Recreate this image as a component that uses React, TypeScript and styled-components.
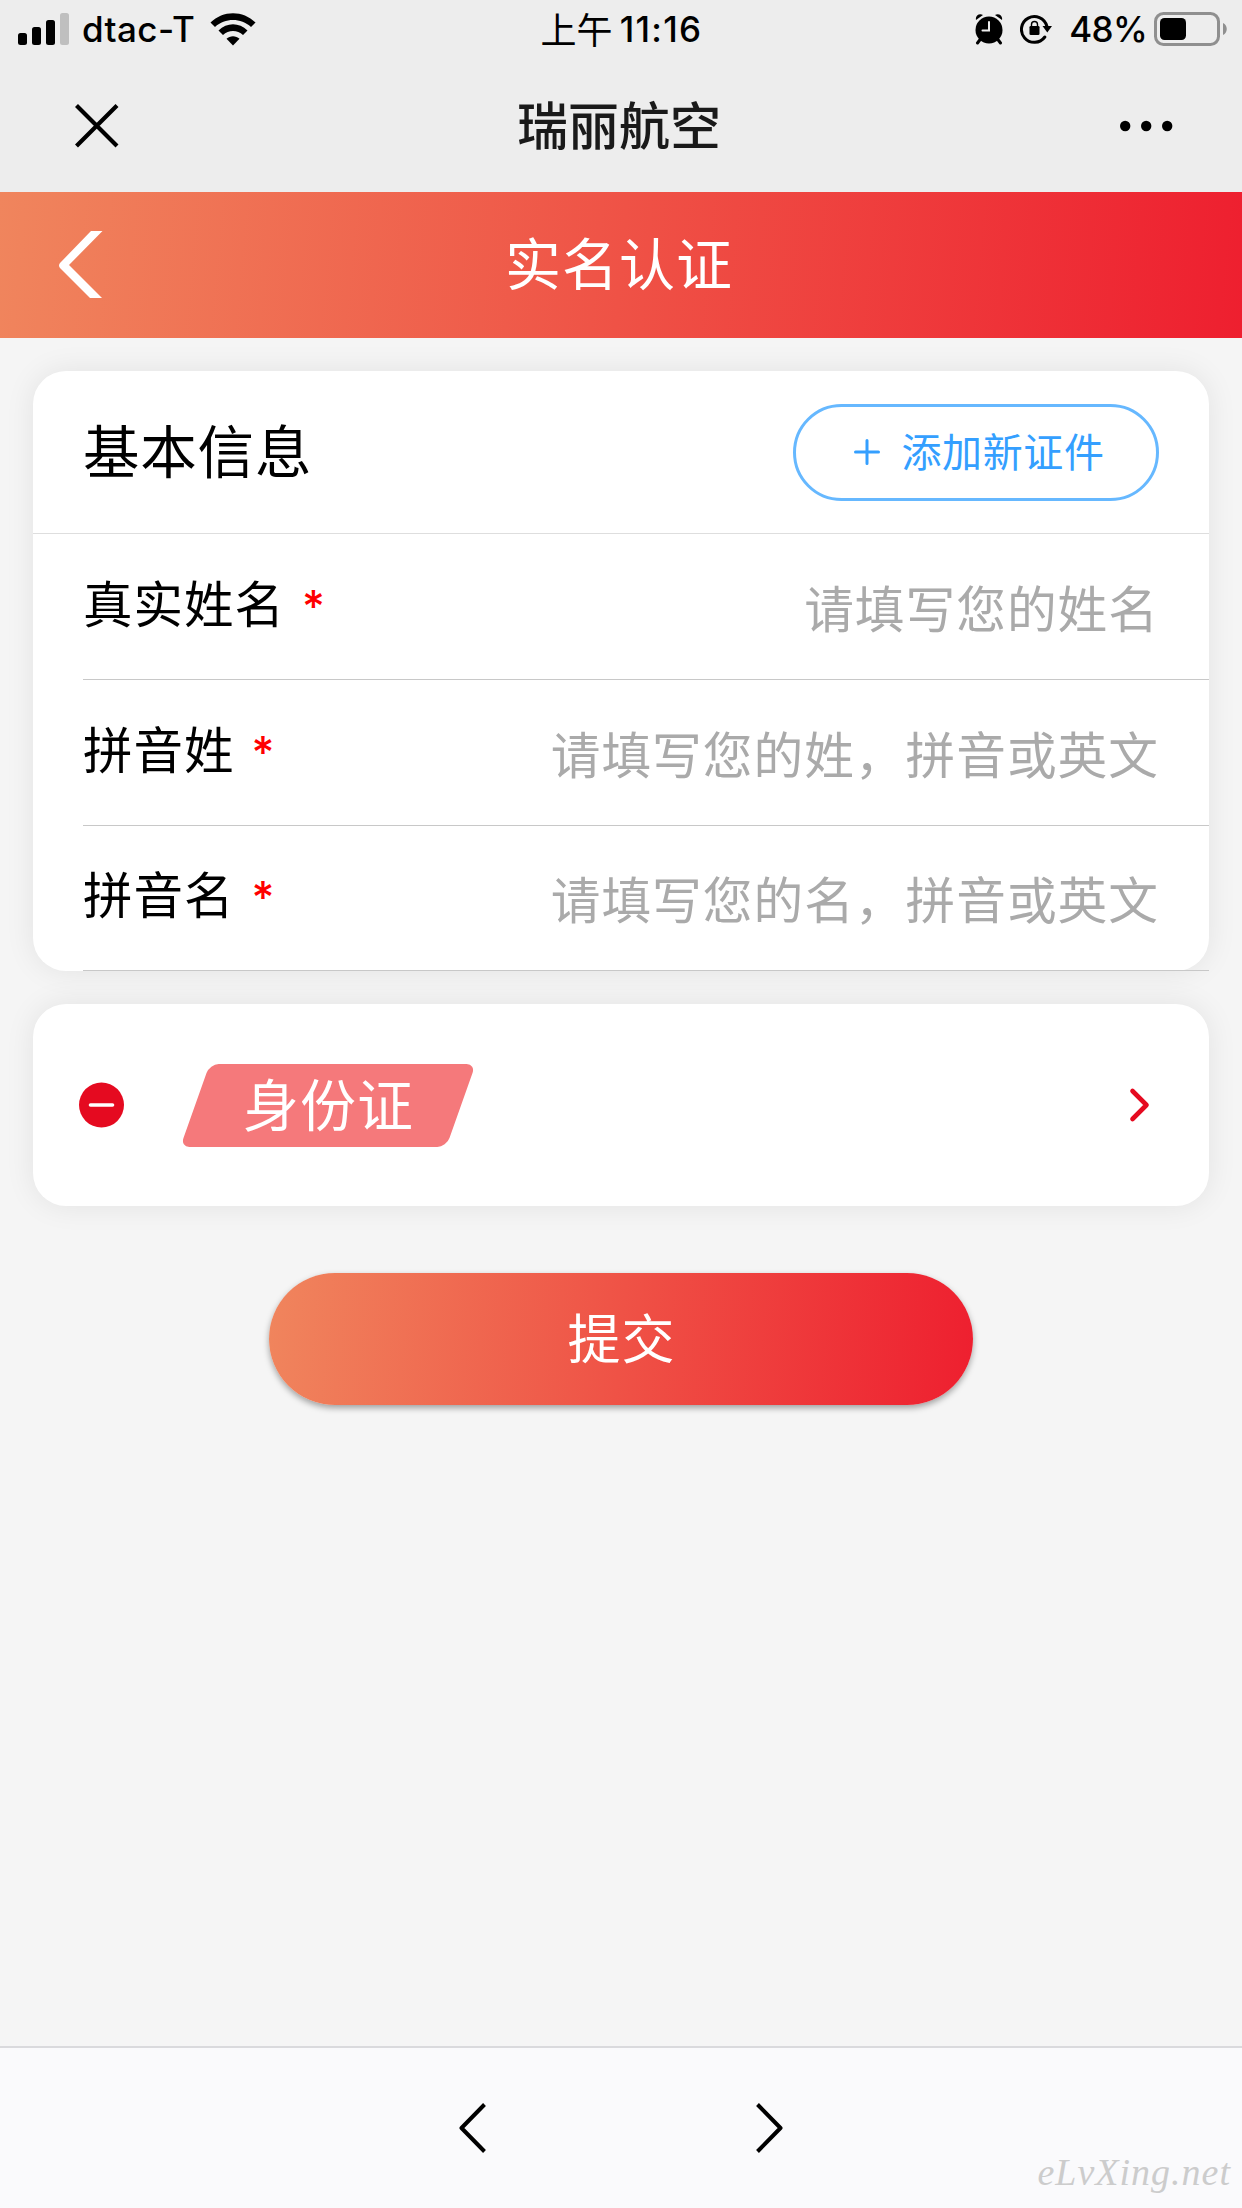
import React from 'react';
import styled, { createGlobalStyle } from 'styled-components';

const GlobalStyle = createGlobalStyle`
  * { box-sizing: border-box; }
  body {
    margin: 0;
    background: #f5f5f5;
    font-family: 'Noto Sans CJK SC', sans-serif;
    color: #000;
  }
  svg { display: block; flex: none; }
`;

const brandGradient = 'linear-gradient(95deg, #f0855d 0%, #ee1f2f 100%)';

const Screen = styled.div`
  width: 1242px;
  height: 2208px;
  display: flex;
  flex-direction: column;
  overflow: hidden;
`;

const Chrome = styled.header`
  height: 192px;
  flex: none;
  background: #ededed;
`;

const StatusBar = styled.div`
  height: 60px;
  display: grid;
  grid-template-columns: 1fr auto 1fr;
  align-items: center;
  padding: 0 15px 2px 18px;
  font-family: Inter, 'Noto Sans CJK SC', sans-serif;
  font-size: 35px;
  font-weight: 500;
  line-height: 56px;
`;

const StatusGroup = styled.div<{ $end?: boolean }>`
  display: flex;
  align-items: center;
  justify-content: ${(p) => (p.$end ? 'flex-end' : 'flex-start')};
`;

const Carrier = styled.span`
  margin: 0 15px 1px 13px;
  letter-spacing: 0.4px;
`;

const Clock = styled.span`
  display: flex;
  gap: 7px;
  margin: 0 2px 1px 0;
`;

const Meridiem = styled.span`
  font-family: 'Noto Sans CJK SC', sans-serif;
  font-size: 36px;
  font-weight: 400;
  line-height: 54px;
`;

const ClockDigits = styled.span`
  letter-spacing: 1.3px;
`;

const Percent = styled.span`
  margin: 0 7px 1px 17px;
  letter-spacing: -0.7px;
`;

const NavBar = styled.div`
  height: 132px;
  display: grid;
  grid-template-columns: 1fr auto 1fr;
  align-items: center;
  padding: 0 68px 1px 74px;
`;

const NavTitle = styled.h1`
  margin: 0 10px 0 0;
  font-size: 51px;
  line-height: 126px;
  padding-bottom: 5px;
  font-weight: 500;
  color: #1a1a1a;
`;

const NavEnd = styled.div`
  display: flex;
  justify-content: flex-end;
`;

const PageHeader = styled.div`
  height: 146px;
  flex: none;
  display: grid;
  grid-template-columns: 1fr auto 1fr;
  align-items: center;
  padding: 0 59px 2px;
  background: ${brandGradient};
`;

const PageTitle = styled.h2`
  margin: 0 4px 0 0;
  padding-bottom: 6px;
  font-size: 56px;
  line-height: 136px;
  font-weight: 400;
  letter-spacing: 1px;
  color: #fff;
`;

const Content = styled.main`
  flex: 1;
  display: flex;
  flex-direction: column;
  gap: 33px;
  padding: 33px 33px 0;
`;

const Card = styled.section`
  border-radius: 33px;
  background: #fff;
  box-shadow: 0 0 30px rgba(0, 0, 0, 0.08);
`;

const CardHead = styled.div`
  height: 163px;
  display: flex;
  align-items: center;
  justify-content: space-between;
  padding: 0 50px;
  border-bottom: 1px solid #dedede;
`;

const CardTitle = styled.h3`
  margin: 0;
  padding-bottom: 8px;
  font-size: 56.5px;
  line-height: 154px;
  font-weight: 400;
  letter-spacing: 0.8px;
`;

const AddButton = styled.button`
  width: 366px;
  height: 97px;
  display: flex;
  align-items: center;
  justify-content: center;
  gap: 22px;
  padding: 0 0 0 6px;
  border: 3px solid #66b8ff;
  border-radius: 49px;
  background: none;
  color: #349fff;
  font: 400 40px/86px 'Noto Sans CJK SC', sans-serif;
  letter-spacing: 0.6px;
`;

const AddLabel = styled.span`
  margin-bottom: 4px;
`;

const Field = styled.label`
  height: 146px;
  margin-left: 50px;
  padding-right: 50px;
  display: flex;
  align-items: center;
  border-bottom: 1px solid #c8c8c8;

  &:last-child { height: 145px; }
`;

const FieldLabel = styled.span`
  font-size: 49.5px;
  line-height: 70px;
  font-weight: 400;
  letter-spacing: 1px;
  margin-bottom: 10px;
`;

const Required = styled.span`
  margin: 0 0 2px 17px;
  font: 500 44px/70px Inter, sans-serif;
  color: #f00;
`;

const FieldInput = styled.input`
  flex: 1;
  min-width: 0;
  height: 100px;
  margin-bottom: 2px;
  padding: 0;
  border: 0;
  outline: 0;
  background: none;
  text-align: right;
  font: 400 49.7px/100px 'Noto Sans CJK SC', sans-serif;
  letter-spacing: 1px;
  &::placeholder { color: #aaa; opacity: 1; }
`;

const DocumentCard = styled(Card)`
  height: 202px;
  display: flex;
  align-items: center;
  padding: 0 55px 0 46px;
`;

const DocumentTag = styled.div`
  width: 266px;
  height: 83px;
  margin: 0 auto 0 71px;
  display: flex;
  justify-content: center;
  border-radius: 9px;
  background: #f5797b;
  transform: skewX(-19.5deg);
`;

const DocumentName = styled.span`
  transform: skewX(19.5deg);
  font-size: 56px;
  line-height: 75px;
  font-weight: 400;
  letter-spacing: 1px;
  color: #fff;
`;

const SubmitButton = styled.button`
  align-self: center;
  width: 704px;
  height: 132px;
  margin-top: 34px;
  padding: 0 0 6px 1px;
  border: 0;
  border-radius: 66px;
  background: ${brandGradient};
  box-shadow: 0 3px 6px rgba(0, 0, 0, 0.35);
  color: #fff;
  font: 400 53px/120px 'Noto Sans CJK SC', sans-serif;
  letter-spacing: 1px;
`;

const BottomBar = styled.footer`
  position: relative;
  height: 162px;
  flex: none;
  display: flex;
  justify-content: center;
  align-items: center;
  gap: 268px;
  border-top: 2px solid #dadadd;
  background: #fafafc;
`;

const Watermark = styled.span`
  position: absolute;
  right: 11px;
  bottom: 12px;
  font: italic 400 38px/48px 'Liberation Serif', serif;
  letter-spacing: 1px;
  color: #ccc;
`;

const SignalIcon = () => (
  <svg width="51" height="32" viewBox="0 0 51 32">
    <rect x="0" y="20" width="9" height="12" rx="2.5" />
    <rect x="14" y="14" width="9" height="18" rx="2.5" />
    <rect x="28" y="7" width="9" height="25" rx="2.5" />
    <rect x="42" y="0" width="9" height="32" rx="2.5" fill="#bfbfbf" />
  </svg>
);

const WifiIcon = () => (
  <svg width="46" height="33" viewBox="0 0 46 33">
    <path d="M0.5 9.5C13-3 33-3 45.500 9.500L41 14C31 4.800 15 4.800 5 14Z" />
    <path d="M8.500 17.500C17 9.200 29 9.200 37.500 17.500L33 22C27.500 16.800 18.500 16.800 13 22Z" />
    <path d="M16.500 25.800C20 22.300 26 22.300 29.500 25.800L23 32.500Z" />
  </svg>
);

const AlarmIcon = () => (
  <svg width="28" height="31" viewBox="0 0 28 31">
    <circle cx="14" cy="16" r="13.500" />
    <path d="M1 6C0 2 4 -1 8 1ZM27 6C28 2 24 -1 20 1Z" />
    <path d="M5.500 25L2.500 29M22.500 25L25.500 29" stroke="#000" strokeWidth="3" strokeLinecap="round" />
    <path d="M14 8V16.500H7.500" fill="none" stroke="#ededed" strokeWidth="2" strokeLinecap="round" />
  </svg>
);

const RotationLockIcon = () => (
  <svg width="32" height="30" viewBox="0 0 32 30">
    <path d="M24.800 23A12.900 12.900 0 1 1 26.800 12" fill="none" stroke="#000" strokeWidth="3" strokeLinecap="round" />
    <path d="M22.500 12H32L27.300 18.500Z" />
    <rect x="9.500" y="12" width="10" height="9" rx="1.300" />
    <path d="M11.500 13V10.500A3 3 0 0 1 17.500 10.500V13" fill="none" stroke="#000" strokeWidth="1.400" />
  </svg>
);

const StatusIcons = styled.div`
  display: flex;
  align-items: center;
  gap: 17px;
`;

const BatteryIcon = () => (
  <svg width="73" height="34" viewBox="0 0 73 34">
    <rect x="1.500" y="1.500" width="63" height="31" rx="8" fill="none" stroke="#8f8f8f" strokeWidth="3" />
    <rect x="6" y="6" width="26" height="22" rx="4.500" />
    <path d="M69 11C74 13 74 21 69 23Z" fill="#8f8f8f" />
  </svg>
);

const CloseIcon = () => (
  <svg width="46" height="46" viewBox="0 0 46 46">
    <path d="M2.500 2.500L43 43M43 2.500L2.500 43" stroke="#000" strokeWidth="4.200" />
  </svg>
);

const MoreIcon = () => (
  <svg width="54" height="12" viewBox="0 0 54 12">
    <circle cx="5.200" cy="6" r="5.200" />
    <circle cx="26.200" cy="6" r="5.200" />
    <circle cx="47.200" cy="6" r="5.200" />
  </svg>
);

const BackIcon = () => (
  <svg width="44" height="67" viewBox="0 0 44 67">
    <path d="M32 0H43.500L10 34L43 67H31L1 37Q-1 34.500 1 32Z" fill="#fff" />
  </svg>
);

const PlusIcon = () => (
  <svg width="26" height="26" viewBox="0 0 26 26">
    <path d="M13 1.500V24.500M1.500 13H24.500" stroke="#349fff" strokeWidth="3" strokeLinecap="round" />
  </svg>
);

const RemoveIcon = () => (
  <svg width="45" height="46" viewBox="0 0 45 46">
    <circle cx="22.500" cy="23" r="22.500" fill="#e50a20" />
    <path d="M11.500 23H33.500" stroke="#fff" strokeWidth="3.600" strokeLinecap="round" />
  </svg>
);

const DetailIcon = () => (
  <svg width="26" height="36" viewBox="0 0 26 36">
    <path
      d="M4.500 4L18.500 18L4.500 32"
      fill="none"
      stroke="#e50a20"
      strokeWidth="4.600"
      strokeLinecap="round"
      strokeLinejoin="round"
    />
  </svg>
);

const PageArrow = ({ forward = false }: { forward?: boolean }) => (
  <svg width="28" height="52" viewBox="0 0 28 52">
    <path
      d={forward ? 'M2.500 2.500L25.500 26L2.500 49.500' : 'M25.500 2.500L2.500 26L25.500 49.500'}
      fill="none"
      stroke="#000"
      strokeWidth="4"
      strokeLinejoin="round"
    />
  </svg>
);

const fields = [
  { label: '真实姓名', placeholder: '请填写您的姓名' },
  { label: '拼音姓', placeholder: '请填写您的姓，拼音或英文' },
  { label: '拼音名', placeholder: '请填写您的名，拼音或英文' },
];

export default function App() {
  return (
    <Screen>
      <GlobalStyle />
      <Chrome>
        <StatusBar>
          <StatusGroup>
            <SignalIcon />
            <Carrier>dtac-T</Carrier>
            <WifiIcon />
          </StatusGroup>
          <Clock>
            <Meridiem>上午</Meridiem>
            <ClockDigits>11:16</ClockDigits>
          </Clock>
          <StatusGroup $end>
            <StatusIcons>
              <AlarmIcon />
              <RotationLockIcon />
            </StatusIcons>
            <Percent>48%</Percent>
            <BatteryIcon />
          </StatusGroup>
        </StatusBar>
        <NavBar>
          <CloseIcon />
          <NavTitle>瑞丽航空</NavTitle>
          <NavEnd>
            <MoreIcon />
          </NavEnd>
        </NavBar>
      </Chrome>
      <PageHeader>
        <BackIcon />
        <PageTitle>实名认证</PageTitle>
      </PageHeader>
      <Content>
        <Card>
          <CardHead>
            <CardTitle>基本信息</CardTitle>
            <AddButton>
              <PlusIcon />
              <AddLabel>添加新证件</AddLabel>
            </AddButton>
          </CardHead>
          {fields.map((f) => (
            <Field key={f.label}>
              <FieldLabel>{f.label}</FieldLabel>
              <Required>*</Required>
              <FieldInput placeholder={f.placeholder} />
            </Field>
          ))}
        </Card>
        <DocumentCard>
          <RemoveIcon />
          <DocumentTag>
            <DocumentName>身份证</DocumentName>
          </DocumentTag>
          <DetailIcon />
        </DocumentCard>
        <SubmitButton>提交</SubmitButton>
      </Content>
      <BottomBar>
        <PageArrow />
        <PageArrow forward />
        <Watermark>eLvXing.net</Watermark>
      </BottomBar>
    </Screen>
  );
}
